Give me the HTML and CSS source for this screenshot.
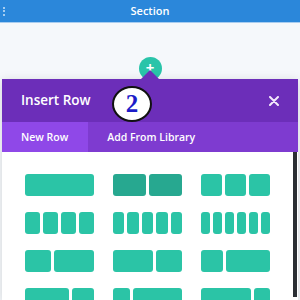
FILE: index.html
```html
<!DOCTYPE html>
<html lang="en">
<head>
    <meta charset="UTF-8">
    <meta name="viewport" content="width=device-width, initial-scale=1.0">
    <title>Insert Row</title>
    <link rel="stylesheet" href="styles.css">
</head>
<body>
    <!-- section bar -->
    <div class="section-bar">
        <div class="dots"><span></span><span></span><span></span></div>
        <div class="section-title">Section</div>
        <div></div>
    </div>

    <div class="stage">
        <div class="add-btn">+</div>

        <!-- insert row modal -->
        <div class="modal">
            <div class="modal-header">
                <h2>Insert Row</h2>
                <div class="step-badge">2</div>
                <svg class="close" width="10" height="10" viewBox="0 0 10 10">
                    <path d="M1 1L9 9M9 1L1 9" stroke="#f3e9fb" stroke-width="2" stroke-linecap="round"/>
                </svg>
            </div>
            <div class="tabs">
                <div class="tab active">New Row</div>
                <div class="tab">Add From Library</div>
            </div>
            <div class="modal-body">
                <div class="layouts">
                    <div class="layout"><i style="flex: 1"></i></div>
                    <div class="layout hover"><i style="flex: 1"></i><i style="flex: 1"></i></div>
                    <div class="layout"><i style="flex: 1"></i><i style="flex: 1"></i><i style="flex: 1"></i></div>

                    <div class="layout"><i style="flex: 1"></i><i style="flex: 1"></i><i style="flex: 1"></i><i style="flex: 1"></i></div>
                    <div class="layout"><i style="flex: 1"></i><i style="flex: 1"></i><i style="flex: 1"></i><i style="flex: 1"></i><i style="flex: 1"></i></div>
                    <div class="layout"><i style="flex: 1"></i><i style="flex: 1"></i><i style="flex: 1"></i><i style="flex: 1"></i><i style="flex: 1"></i><i style="flex: 1"></i></div>

                    <div class="layout"><i style="flex: 2"></i><i style="flex: 3"></i></div>
                    <div class="layout"><i style="flex: 3"></i><i style="flex: 2"></i></div>
                    <div class="layout"><i style="flex: 1"></i><i style="flex: 2"></i></div>

                    <div class="layout"><i style="flex: 2"></i><i style="flex: 1"></i></div>
                    <div class="layout"><i style="flex: 1"></i><i style="flex: 3"></i></div>
                    <div class="layout"><i style="flex: 3"></i><i style="flex: 1"></i></div>
                </div>
                <div class="scrollbar"></div>
            </div>
        </div>
    </div>
</body>
</html>
```

FILE: styles.css
```css
* {
    box-sizing: border-box;
    margin: 0;
    padding: 0;
}

body {
    font-family: 'Open Sans', 'Noto Sans', sans-serif;
    background-color: #f5f8fb;
    width: 300px;
    height: 300px;
    overflow: hidden;
}

/* section bar */
.section-bar {
    height: 23px;
    background: #2b87da;
    border-bottom: 1px solid #a8cdf0;
    display: grid;
    grid-template-columns: 1fr auto 1fr;
    align-items: center;
}

.dots {
    display: flex;
    flex-direction: column;
    gap: 1.5px;
    padding-left: 3px;
}

.dots span {
    width: 2px;
    height: 2px;
    background: #cfe4f7;
    border-radius: 1px;
}

.section-title {
    color: #fff;
    font-size: 11px;
    font-weight: 600;
    margin-top: -2px;
}

/* stage */
.stage {
    padding-top: 34px;
    display: flex;
    flex-direction: column;
    align-items: center;
}

.add-btn {
    width: 23px;
    height: 23px;
    border-radius: 50%;
    background: #29c4a9;
    color: #fff;
    font-size: 15px;
    font-weight: 700;
    line-height: 20px;
    text-align: center;
}

/* modal */
.modal {
    width: 296px;
    margin-top: -1px;
    position: relative;
    box-shadow: 0 2px 10px rgba(0,0,0,0.15);
}

.modal-header {
    position: relative;
    height: 43px;
    background: #6c2eb9;
    display: flex;
    align-items: center;
    justify-content: space-between;
    padding: 0 19px 0 19px;
}

.modal-header::before {
    content: '';
    position: absolute;
    top: -9px;
    left: 139px;
    border-left: 9px solid transparent;
    border-right: 9px solid transparent;
    border-bottom: 9px solid #6c2eb9;
}

.modal-header h2 {
    color: #fff;
    font-size: 13.5px;
    font-weight: 600;
    margin-top: -1px;
}

.close {
    margin-right: 0;
}

.step-badge {
    position: absolute;
    left: 110px;
    top: 7px;
    width: 40px;
    height: 36px;
    border-radius: 50%;
    background: #fff;
    border: 2px solid #111;
    color: #1c1cc8;
    font-family: 'Liberation Serif', serif;
    font-weight: 700;
    font-size: 25px;
    line-height: 32px;
    text-align: center;
}

.tabs {
    display: flex;
    height: 30px;
    background: #7e3bd0;
}

.tab {
    display: flex;
    align-items: center;
    padding: 0 20px 0 19px;
    color: #fff;
    font-size: 10.5px;
    font-weight: 600;
}

.tab.active {
    background: #8f48e8;
}

.modal-body {
    display: flex;
    height: 148px;
    background: #fff;
}

.layouts {
    display: grid;
    grid-template-columns: repeat(3, 69px);
    grid-auto-rows: 22px;
    column-gap: 19px;
    row-gap: 16px;
    padding: 22px 0 0 23px;
}

.layout {
    display: flex;
    gap: 3px;
}

.layout i {
    background: #2bc4a6;
    border-radius: 3px;
}

.layout.hover i {
    background: #27a890;
}

.scrollbar {
    width: 4px;
    height: 145px;
    margin-left: auto;
    margin-right: 1px;
    background: #2b2e33;
}
```
